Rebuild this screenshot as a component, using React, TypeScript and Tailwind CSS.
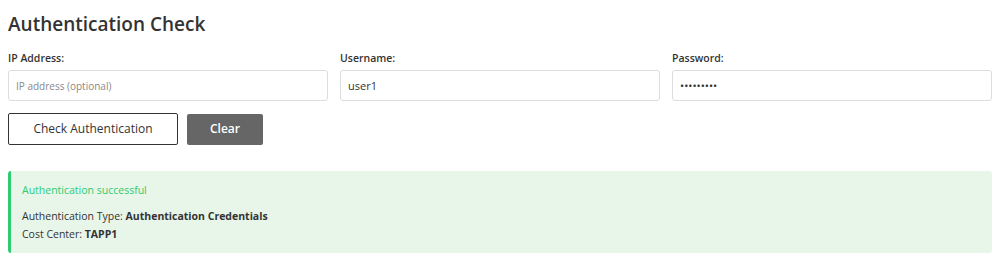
export default function App() {
  return (
    <div
      className="w-[1008px] h-[266px] bg-white pl-2 pr-4 pt-[10px] text-[#333]"
      style={{ fontFamily: '"Open Sans", "Liberation Sans", sans-serif' }}
    >
      <h1 className="text-[19px] font-semibold leading-[28px] text-[#333]">Authentication Check</h1>

      <div className="mt-[12px] grid grid-cols-3 gap-3">
        <Field label="IP Address:">
          <input
            type="text"
            placeholder="IP address (optional)"
            className="h-[31px] w-full rounded-[3px] border border-[#ddd] px-[7px] text-[11px] text-[#333] placeholder:text-[10px] placeholder:text-[#888] outline-none"
          />
        </Field>
        <Field label="Username:">
          <input
            type="text"
            defaultValue="user1"
            className="h-[31px] w-full rounded-[3px] border border-[#ddd] px-[7px] text-[11px] text-[#333] outline-none"
          />
        </Field>
        <Field label="Password:">
          <input
            type="password"
            defaultValue="secretpwd"
            className="h-[31px] w-full rounded-[3px] border border-[#ddd] px-[7px] text-[11px] text-[#333] outline-none"
          />
        </Field>
      </div>

      <div className="mt-[12px] flex items-center gap-[9px]">
        <button className="h-[32px] w-[170px] rounded-[2px] border border-[#333] bg-white text-[12px] text-[#333]">
          Check Authentication
        </button>
        <button className="h-[31px] w-[76px] rounded-[2px] bg-[#666] text-[12px] font-semibold text-white">
          Clear
        </button>
      </div>

      <div className="mt-[26px] rounded-[3px] border-l-[3px] border-[#2ecc71] bg-[#e8f5e9] pl-[11px] pr-3 pt-[11px] pb-[10px] text-[10.5px]">
        <div className="leading-[16px] text-[#2ecc71]">Authentication successful</div>
        <div className="mt-[9px] leading-[18px]">
          Authentication Type: <span className="font-bold">Authentication Credentials</span>
        </div>
        <div className="leading-[18px]">
          Cost Center: <span className="font-bold">TAPP1</span>
        </div>
      </div>
    </div>
  );
}

function Field({ label, children }: { label: string; children: React.ReactNode }) {
  return (
    <div>
      <label className="mb-[4px] block text-[10.5px] font-semibold leading-[16px] text-[#333]">{label}</label>
      {children}
    </div>
  );
}
